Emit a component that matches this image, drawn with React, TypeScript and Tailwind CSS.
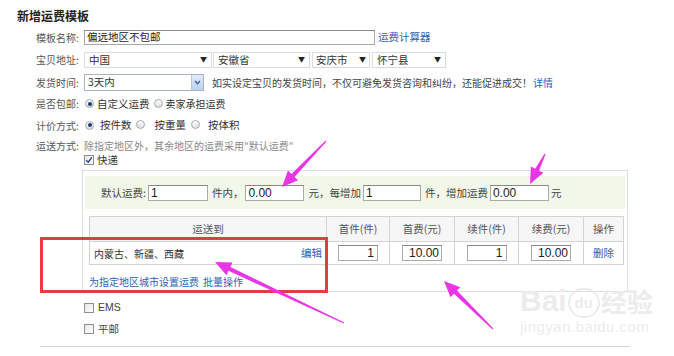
import React from "react";

type Pt = [number, number];

// tapered magenta arrow, drawn from tail to tip
function arrowPoints(tail: Pt, tip: Pt, head = 16, wing = 7) {
  const dx = tip[0] - tail[0];
  const dy = tip[1] - tail[1];
  const len = Math.hypot(dx, dy);
  const ux = dx / len;
  const uy = dy / len;
  const nx = -uy;
  const ny = ux;
  const bx = tip[0] - ux * head;
  const by = tip[1] - uy * head;
  const p = (x: number, y: number) => `${x.toFixed(1)},${y.toFixed(1)}`;
  return [
    p(tail[0] + nx * 0.6, tail[1] + ny * 0.6),
    p(bx + nx * 2.2, by + ny * 2.2),
    p(bx + nx * wing, by + ny * wing),
    p(tip[0], tip[1]),
    p(bx - nx * wing, by - ny * wing),
    p(bx - nx * 2.2, by - ny * 2.2),
    p(tail[0] - nx * 0.6, tail[1] - ny * 0.6),
  ].join(" ");
}

function Radio({ checked }: { checked?: boolean }) {
  return (
    <span className="inline-flex h-[9px] w-[9px] shrink-0 items-center justify-center rounded-full border border-[#a3abb3] bg-gradient-to-b from-white to-[#dcdcdc]">
      {checked && <span className="h-[4px] w-[4px] rounded-full bg-[#1d3b6b]" />}
    </span>
  );
}

function Check({ checked }: { checked?: boolean }) {
  return (
    <span className="inline-flex h-[10px] w-[10px] shrink-0 items-center justify-center border border-[#8e8f8f] bg-gradient-to-br from-[#e6e6e6] to-white">
      {checked && (
        <svg viewBox="0 0 10 10" className="h-[8px] w-[8px]">
          <path d="M1.5 5.2 L4 7.8 L8.6 1.8" fill="none" stroke="#1b3f7a" strokeWidth="1.6" />
        </svg>
      )}
    </span>
  );
}

function Caret() {
  return <span className="text-[7px] leading-none text-[#222]">▼</span>;
}

export default function App() {
  const arrows: [Pt, Pt][] = [
    [[326, 141], [282, 187]],
    [[545, 154], [530, 184]],
    [[493, 329], [444, 281]],
    [[344, 323], [215, 262]],
  ];

  return (
    <div className="relative h-[356px] w-[674px] overflow-hidden bg-white font-['Noto_Sans_CJK_SC',sans-serif] text-[10.5px] text-[#333]">
      <div className="pt-[6px]">
        <h1 className="flex h-[20px] items-center pl-[17px] text-[12px] font-bold text-[#222]">新增运费模板</h1>

        <div className="flex flex-col pl-[36px]">
          <div className="flex h-[22px] items-center">
            <span className="w-[48px] text-[10px] text-[#555]">模板名称:</span>
            <div className="flex h-[15px] w-[291px] items-center border border-[#a8a8a8] border-t-[#8a8a8a] bg-white pl-[2px] text-[#222]">
              偏远地区不包邮
            </div>
            <a className="ml-[3px] text-[#2d62b5]">运费计算器</a>
          </div>

          <div className="flex h-[23px] items-center">
            <span className="w-[48px] text-[10px] text-[#555]">宝贝地址:</span>
            <div className="flex h-[16px] w-[128px] items-center justify-between border border-[#dcdcdc] px-[4px]">
              <span>中国</span>
              <Caret />
            </div>
            <div className="ml-[1px] flex h-[16px] w-[97px] items-center justify-between border border-[#dcdcdc] px-[4px]">
              <span>安徽省</span>
              <Caret />
            </div>
            <div className="ml-[2px] flex h-[16px] w-[58px] items-center justify-between border border-[#dcdcdc] px-[3px]">
              <span>安庆市</span>
              <Caret />
            </div>
            <div className="ml-[2px] flex h-[16px] w-[74px] items-center justify-between border border-[#dcdcdc] px-[4px]">
              <span>怀宁县</span>
              <Caret />
            </div>
          </div>

          <div className="flex h-[22px] items-center">
            <span className="w-[48px] text-[10px] text-[#555]">发货时间:</span>
            <div className="flex h-[17px] w-[120px] items-center justify-between border border-[#a8b4c4] pl-[3px]">
              <span>3天内</span>
              <span className="flex h-full w-[12px] items-center justify-center border-l border-[#b7c8e0] bg-gradient-to-b from-[#e3ecf9] to-[#bcd1ef]">
                <svg viewBox="0 0 8 6" className="h-[5px] w-[7px]">
                  <path d="M1 1.2 L4 4.4 L7 1.2" fill="none" stroke="#3b5f99" strokeWidth="1.6" />
                </svg>
              </span>
            </div>
            <span className="ml-[8px] text-[10px] text-[#444]">如实设定宝贝的发货时间，不仅可避免发货咨询和纠纷，还能促进成交！</span>
            <a className="ml-[1px] text-[10px] text-[#2d62b5]">详情</a>
          </div>

          <div className="flex h-[21px] items-center">
            <span className="w-[49px] text-[10px] text-[#555]">是否包邮:</span>
            <Radio checked />
            <span className="ml-[3px]">自定义运费</span>
            <span className="ml-[4px]"><Radio /></span>
            <span className="ml-[3px] text-[10px]">卖家承担运费</span>
          </div>

          <div className="flex h-[22px] items-center">
            <span className="w-[49px] text-[10px] text-[#555]">计价方式:</span>
            <Radio checked />
            <span className="ml-[6px]">按件数</span>
            <span className="ml-[4px]"><Radio /></span>
            <span className="ml-[10px]">按重量</span>
            <span className="ml-[5px]"><Radio /></span>
            <span className="ml-[8px]">按体积</span>
          </div>

          <div className="flex h-[18px] items-center">
            <span className="w-[48px] text-[10px] text-[#555]">运送方式:</span>
            <span className="text-[10px] text-[#888]">除指定地区外，其余地区的运费采用"默认运费"</span>
          </div>

          <div className="flex h-[12px] items-center pl-[48px]">
            <Check checked />
            <span className="ml-[3px]">快递</span>
          </div>

          <div className="ml-[46px] mt-[4px] h-[122px] w-[546px] border border-[#d9e0e6] pt-[5px]">
            <div className="mx-[2px] flex h-[33px] items-center bg-[#f1f8e9] pl-[16px] text-[#444]">
              <span>默认运费:</span>
              <div className="ml-[2px] flex h-[16px] w-[60px] items-center border border-[#aaa] border-t-[#888] bg-white pl-[2px] font-['Liberation_Sans',sans-serif] text-[12px] text-[#222]">1</div>
              <span className="ml-[4px]">件内，</span>
              <div className="ml-[2px] flex h-[16px] w-[59px] items-center border border-[#aaa] border-t-[#888] bg-white pl-[2px] font-['Liberation_Sans',sans-serif] text-[12px] text-[#222]">0.00</div>
              <span className="ml-[4px]">元，每增加</span>
              <div className="ml-[2px] flex h-[16px] w-[58px] items-center border border-[#aaa] border-t-[#888] bg-white pl-[2px] font-['Liberation_Sans',sans-serif] text-[12px] text-[#222]">1</div>
              <span className="ml-[4px]">件，增加运费</span>
              <div className="ml-[2px] flex h-[16px] w-[59px] items-center border border-[#aaa] border-t-[#888] bg-white pl-[2px] font-['Liberation_Sans',sans-serif] text-[12px] text-[#222]">0.00</div>
              <span className="ml-[2px]">元</span>
            </div>

            <table className="ml-[6px] mt-[7px] w-[534px] table-fixed border-collapse border border-[#d3d3d3] text-[#555]">
              <colgroup>
                <col className="w-[237px]" />
                <col className="w-[63px]" />
                <col className="w-[65px]" />
                <col className="w-[64px]" />
                <col className="w-[65px]" />
                <col className="w-[40px]" />
              </colgroup>
              <thead>
                <tr className="h-[25px] bg-[#f6f6f6]">
                  <th className="border border-[#d3d3d3] font-normal">运送到</th>
                  <th className="border border-[#d3d3d3] font-normal">首件(件)</th>
                  <th className="border border-[#d3d3d3] font-normal">首费(元)</th>
                  <th className="border border-[#d3d3d3] font-normal">续件(件)</th>
                  <th className="border border-[#d3d3d3] font-normal">续费(元)</th>
                  <th className="border border-[#d3d3d3] font-normal">操作</th>
                </tr>
              </thead>
              <tbody>
                <tr className="h-[23px]">
                  <td className="border border-[#d3d3d3] px-[4px]">
                    <div className="flex items-center justify-between text-[10px] text-[#333]">
                      <span>内蒙古、新疆、西藏</span>
                      <a className="text-[10.5px] text-[#2d62b5]">编辑</a>
                    </div>
                  </td>
                  <td className="border border-[#d3d3d3]">
                    <div className="mx-auto flex h-[16px] w-[40px] items-center justify-end border border-[#aaa] border-t-[#888] pr-[3px] font-['Liberation_Sans',sans-serif] text-[12px] text-[#222]">1</div>
                  </td>
                  <td className="border border-[#d3d3d3]">
                    <div className="mx-auto flex h-[16px] w-[40px] items-center justify-end border border-[#aaa] border-t-[#888] pr-[2px] font-['Liberation_Sans',sans-serif] text-[12px] text-[#222]">10.00</div>
                  </td>
                  <td className="border border-[#d3d3d3]">
                    <div className="mx-auto flex h-[16px] w-[40px] items-center justify-end border border-[#aaa] border-t-[#888] pr-[3px] font-['Liberation_Sans',sans-serif] text-[12px] text-[#222]">1</div>
                  </td>
                  <td className="border border-[#d3d3d3]">
                    <div className="mx-auto flex h-[16px] w-[40px] items-center justify-end border border-[#aaa] border-t-[#888] pr-[2px] font-['Liberation_Sans',sans-serif] text-[12px] text-[#222]">10.00</div>
                  </td>
                  <td className="border border-[#d3d3d3] text-center text-[#2d62b5]">删除</td>
                </tr>
              </tbody>
            </table>

            <div className="ml-[6px] mt-[8px] flex h-[16px] items-center text-[10px] text-[#2d62b5]">
              <a>为指定地区城市设置运费</a>
              <a className="ml-[4px]">批量操作</a>
            </div>
          </div>

          <div className="mt-[9px] flex h-[14px] items-center pl-[48px]">
            <Check />
            <span className="ml-[4px] font-['Liberation_Sans',sans-serif] text-[#444]">EMS</span>
          </div>
          <div className="mt-[7px] flex h-[14px] items-center pl-[48px]">
            <Check />
            <span className="ml-[4px] text-[#444]">平邮</span>
          </div>
          <div className="ml-[4px] mt-[10px] h-px w-[590px] bg-[#d4d4d4]" />
        </div>
      </div>

      {/* red highlight box */}
      <div className="absolute left-[40px] top-[237px] h-[56px] w-[288px] border-[3px] border-[#e63c3e]" />

      {/* watermark */}
      <div className="absolute left-[520px] top-[284px] flex flex-col items-start text-[#ececec]">
        <div className="flex items-end font-['Liberation_Sans',sans-serif] text-[30px] font-bold leading-[34px]">
          <span>Bai</span>
          <span className="mx-[1px] flex h-[30px] w-[32px] items-center justify-center rounded-full border-2 border-[#ececec] text-[15px]">du</span>
          <span className="font-['Noto_Sans_CJK_SC',sans-serif] text-[26px]">经验</span>
        </div>
        <span className="font-['Liberation_Sans',sans-serif] text-[15px] leading-[18px] tracking-[0.5px]">jingyan.baidu.com</span>
      </div>

      {/* magenta annotation arrows */}
      <svg className="absolute left-0 top-0 h-[356px] w-[674px]" viewBox="0 0 674 356">
        {arrows.map(([tail, tip], i) => (
          <polygon key={i} points={arrowPoints(tail, tip)} fill="#e935e6" />
        ))}
      </svg>
    </div>
  );
}
